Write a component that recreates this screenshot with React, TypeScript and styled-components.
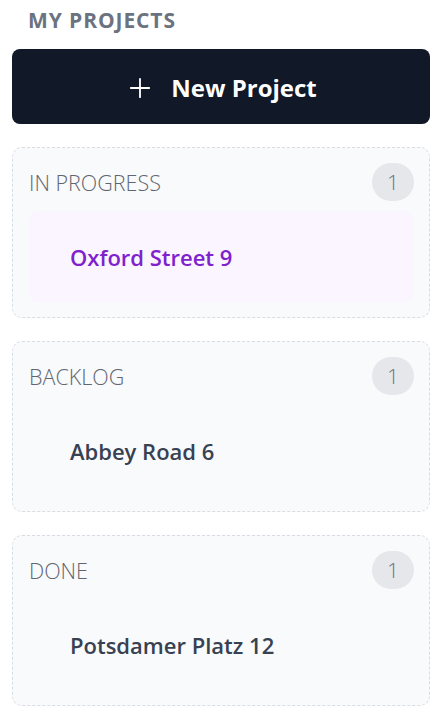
import styled, { createGlobalStyle } from 'styled-components';

const GlobalStyle = createGlobalStyle`
  body {
    margin: 0;
    background: #ffffff;
    font-family: 'Open Sans', 'Noto Sans', sans-serif;
  }
`;

type Project = { name: string };
type Column = { title: string; projects: Project[]; active?: boolean };

const columns: Column[] = [
  { title: 'IN PROGRESS', projects: [{ name: 'Oxford Street 9' }], active: true },
  { title: 'BACKLOG', projects: [{ name: 'Abbey Road 6' }] },
  { title: 'DONE', projects: [{ name: 'Potsdamer Platz 12' }] },
];

function App() {
  return (
    <Sidebar>
      <GlobalStyle />
      <Heading>MY PROJECTS</Heading>
      <NewButton>
        <svg width="22" height="22" viewBox="0 0 24 24" fill="none" stroke="currentColor" strokeWidth="2" strokeLinecap="round">
          <path d="M12 2v20M2 12h20" />
        </svg>
        <span>New Project</span>
      </NewButton>
      <ColumnList>
        {columns.map((col) => (
          <StatusCard key={col.title}>
            <CardHeader>
              <StatusTitle>{col.title}</StatusTitle>
              <CountBadge>{col.projects.length}</CountBadge>
            </CardHeader>
            {col.projects.map((p) => (
              <ProjectItem key={p.name} $active={col.active}>
                {p.name}
              </ProjectItem>
            ))}
          </StatusCard>
        ))}
      </ColumnList>
    </Sidebar>
  );
}

export default App;

const Sidebar = styled.div`
  display: flex;
  flex-direction: column;
  padding: 6px 12px 12px;
  width: 418px;
`;

const Heading = styled.div`
  font-size: 21px;
  font-weight: 700;
  color: #6b7280;
  letter-spacing: 0.9px;
  padding-left: 16px;
  line-height: 28px;
  margin-bottom: 15px;
`;

const NewButton = styled.button`
  display: flex;
  align-items: center;
  justify-content: center;
  gap: 20px;
  height: 75px;
  width: 100%;
  border: 0;
  border-radius: 8px;
  background-color: #111827;
  color: #ffffff;
  font-family: inherit;
  font-size: 24px;
  font-weight: 700;
  cursor: pointer;
  padding: 2px 0 0 4px;
`;

const ColumnList = styled.div`
  display: flex;
  flex-direction: column;
  gap: 23px;
  margin-top: 23px;
`;

const StatusCard = styled.div`
  display: flex;
  flex-direction: column;
  gap: 10px;
  padding: 15px 15px 15px 16px;
  border: 1px dashed #d9dde3;
  border-radius: 10px;
  background-color: #f9fafb;
`;

const CardHeader = styled.div`
  display: flex;
  align-items: center;
  justify-content: space-between;
`;

const StatusTitle = styled.div`
  font-size: 21.5px;
  font-weight: 300;
  color: #5f6672;
`;

const CountBadge = styled.div`
  display: flex;
  align-items: center;
  justify-content: center;
  width: 42px;
  height: 38px;
  border-radius: 19px;
  background-color: #e5e7eb;
  color: #6b7280;
  font-size: 21px;
  font-weight: 300;
`;

const ProjectItem = styled.div<{ $active?: boolean }>`
  display: flex;
  align-items: center;
  height: 91px;
  padding-left: 41px;
  border-radius: 10px;
  background-color: ${(p) => (p.$active ? '#faf5ff' : 'transparent')};
  color: ${(p) => (p.$active ? '#7e22ce' : '#374151')};
  font-size: 22px;
  font-weight: 600;
`;
